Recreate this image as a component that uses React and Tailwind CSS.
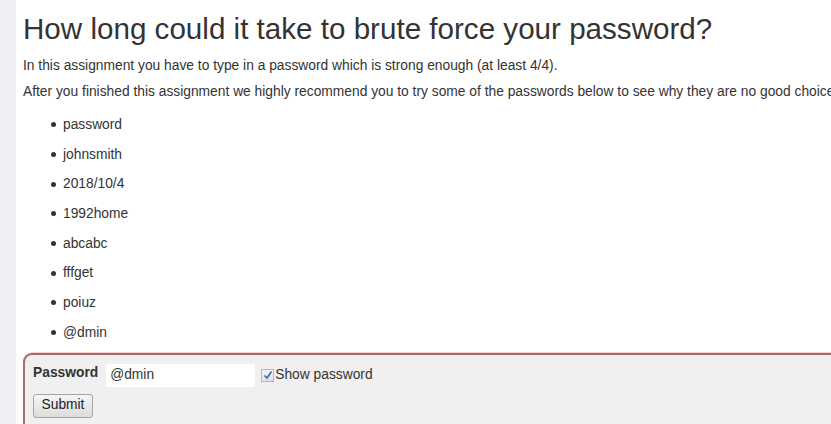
const passwords = ['password', 'johnsmith', '2018/10/4', '1992home', 'abcabc', 'fffget', 'poiuz', '@dmin']

export default function App() {
  return (
    <div className="flex h-[424px] w-[831px] overflow-hidden bg-white text-[#333] font-['Liberation_Sans',Arial,sans-serif]">
      {/* left gutter */}
      <div className="w-4 shrink-0 bg-[#eef0f6]" />

      <div className="flex min-w-0 flex-1 flex-col pl-[7px]">
        <h1 className="mt-[12px] whitespace-nowrap text-[29.6px] leading-[34px] font-normal text-[#333]">
          How long could it take to brute force your password?
        </h1>
        <p className="mt-[12px] whitespace-nowrap text-[13.8px] leading-[16px]">
          In this assignment you have to type in a password which is strong enough (at least 4/4).
        </p>
        <p className="mt-[10px] whitespace-nowrap text-[13.8px] leading-[16px]">
          After you finished this assignment we highly recommend you to try some of the passwords below to see why they are no good choices.
        </p>

        <ul className="mt-[9px] flex flex-col pl-[28px] text-[13.8px] leading-[16px]">
          {passwords.map((pw) => (
            <li key={pw} className="flex h-[29.7px] items-center gap-[7px] pt-[2px]">
              <span className="h-[5px] w-[5px] rounded-full bg-[#333]" />
              {pw}
            </li>
          ))}
        </ul>

        {/* password form */}
        <div className="mt-[6px] flex-1 rounded-tl-[9px] border-l-2 border-t-2 border-[#a46e6e] bg-[#f0f0f0] pl-[8px] pt-[9px] shadow-[0_-1px_0_#f4d0d0]">
          <div className="flex items-center">
            <span className="mr-[8px] -mt-[3px] text-[13.8px] font-bold">Password</span>
            <div className="flex h-[23px] w-[149px] items-center bg-white pl-[4px] text-[13.8px]">@dmin</div>
            <span className="ml-[6px] mr-[1px] flex h-[13px] w-[13px] items-center justify-center border border-[#b8b8b8] bg-gradient-to-b from-[#f4f4f4] to-[#e0e0e0]">
              <svg width="10" height="10" viewBox="0 0 10 10">
                <path d="M1.5 5.5 L4 8 L8.5 1.5" fill="none" stroke="#3a66c4" strokeWidth="1.6" />
              </svg>
            </span>
            <span className="text-[13.8px]">Show password</span>
          </div>
          <button className="mt-[7px] h-[24px] w-[60px] rounded-[3px] border border-[#a6a6a6] bg-gradient-to-b from-[#f6f6f6] to-[#dcdcdc] text-[13.8px] text-[#222]">
            Submit
          </button>
        </div>
      </div>
    </div>
  )
}
